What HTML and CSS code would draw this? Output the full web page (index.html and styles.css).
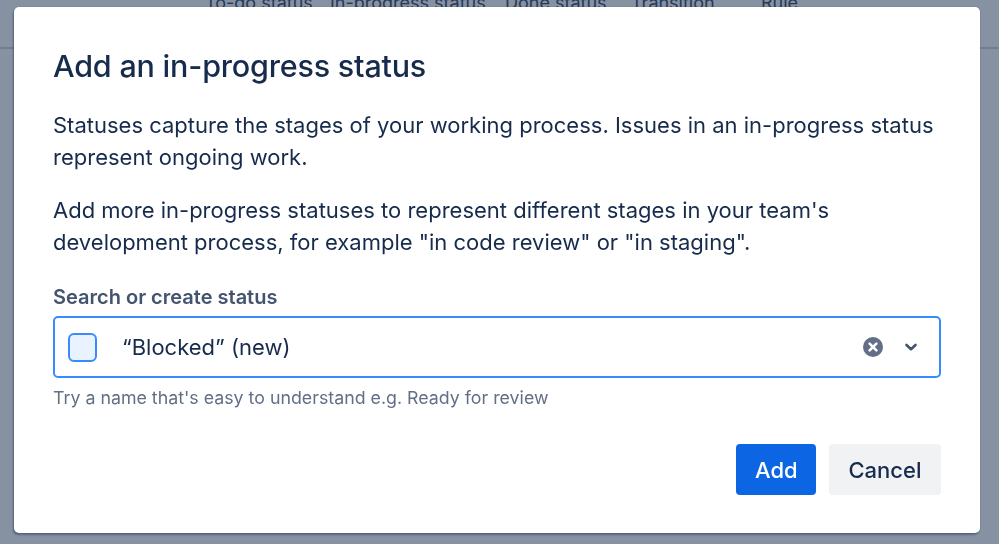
FILE: index.html
```html
<!DOCTYPE html>
<html lang="en">
<head>
<meta charset="utf-8">
<title>Add an in-progress status</title>
<link rel="stylesheet" href="styles.css">
</head>
<body>
<div class="page">
  <div class="table-head">
    <span class="col col-todo">To-do status</span>
    <span class="col col-prog">In-progress status</span>
    <span class="col col-done">Done status</span>
    <span class="col col-trans">Transition</span>
    <span class="col col-rule">Rule</span>
  </div>
</div>
<div class="blanket"></div>
<section class="modal" role="dialog" aria-labelledby="modal-title">
  <h1 class="modal-title" id="modal-title">Add an in-progress status</h1>
  <div class="modal-body">
    <p class="para">Statuses capture the stages of your working process. Issues in an in-progress status represent ongoing work.</p>
    <p class="para">Add more in-progress statuses to represent different stages in your team's development process, for example "in code review" or "in staging".</p>
    <label class="field-label" for="status">Search or create status</label>
    <div class="select">
      <span class="check"></span>
      <span class="select-value" id="status">“Blocked” (new)</span>
      <span class="select-icons">
        <svg class="icon-clear" width="20" height="20" viewBox="0 0 20 20" aria-hidden="true">
          <circle cx="10" cy="10" r="10" fill="#626f86"/>
          <path d="M6.6 6.6 L13.4 13.4 M13.4 6.6 L6.6 13.4" stroke="#fff" stroke-width="2.6" stroke-linecap="round"/>
        </svg>
        <svg class="icon-chevron" width="16" height="16" viewBox="0 0 16 16" aria-hidden="true">
          <path d="M3.5 6 L8 10.2 L12.5 6" fill="none" stroke="#44546f" stroke-width="2.6" stroke-linecap="round" stroke-linejoin="round"/>
        </svg>
      </span>
    </div>
    <p class="helper">Try a name that's easy to understand e.g. Ready for review</p>
  </div>
  <div class="modal-footer">
    <button class="btn btn-primary" type="button">Add</button>
    <button class="btn btn-subtle" type="button">Cancel</button>
  </div>
</section>
</body>
</html>
```
FILE: styles.css
```css
* { box-sizing: border-box; }

html, body {
  margin: 0;
  padding: 0;
  width: 999px;
  height: 544px;
  overflow: hidden;
  background: #ffffff;
  font-family: Inter, "Noto Sans", "Liberation Sans", sans-serif;
  color: #172b4d;
}

.page {
  width: 999px;
  height: 544px;
}

.table-head {
  display: flex;
  height: 49px;
  border-bottom: 2px solid #d4d8df;
  align-items: flex-start;
}

.col {
  font-size: 18px;
  line-height: 18px;
  margin-top: -6px;
  color: #44546f;
  white-space: nowrap;
}
.col-todo { margin-left: 205px; width: 125px; }
.col-prog { width: 175px; }
.col-done { width: 126px; }
.col-trans { width: 130px; }

.blanket {
  position: fixed;
  inset: 0;
  background: rgba(9, 30, 66, 0.49);
}

.modal {
  position: absolute;
  top: 7px;
  left: 14px;
  width: 966px;
  height: 526px;
  background: #ffffff;
  border-radius: 5px;
  padding: 0 39px;
  display: flex;
  flex-direction: column;
  box-shadow: 0 0 0 1px rgba(9, 30, 66, 0.06), -1px 2px 2px rgba(9, 30, 66, 0.35);
}

.modal-title {
  margin: 41px 0 0;
  font-size: 30.5px;
  line-height: 36px;
  font-weight: 500;
  letter-spacing: -0.2px;
  color: #172b4d;
}

.modal-body {
  display: flex;
  flex-direction: column;
  margin-top: 25px;
}

.para {
  margin: 0 0 21px;
  font-size: 22px;
  line-height: 32px;
  color: #172b4d;
}

.para + .para { margin-bottom: 30px; }

.field-label {
  font-size: 20px;
  line-height: 26px;
  font-weight: 600;
  color: #44546f;
  margin-top: -4px;
}

.select {
  margin-top: 6px;
  height: 62px;
  border: 2px solid #388bff;
  border-radius: 5px;
  display: flex;
  align-items: center;
  padding: 0 20px 0 13px;
  background: #ffffff;
}

.check {
  width: 29px;
  height: 29px;
  border: 2px solid #388bff;
  background: #e9f2ff;
  border-radius: 6px;
  flex: none;
}

.select-value {
  margin-left: 25px;
  font-size: 22px;
  line-height: 30px;
  color: #172b4d;
  flex: 1;
}

.select-icons {
  display: flex;
  align-items: center;
  gap: 20px;
}

.icon-clear, .icon-chevron { display: block; }

.helper {
  margin: 7px 0 0;
  font-size: 17.8px;
  line-height: 26px;
  color: #626f86;
}

.modal-footer {
  display: flex;
  justify-content: flex-end;
  gap: 13px;
  margin-top: 33px;
}

.btn {
  height: 51px;
  border: none;
  border-radius: 4px;
  font-family: inherit;
  font-size: 22px;
  font-weight: 500;
  padding: 0 19px;
  cursor: pointer;
}

.btn-primary {
  background: #0c66e4;
  color: #ffffff;
  width: 80px;
}

.btn-subtle {
  background: #f1f2f4;
  color: #172b4d;
  width: 112px;
}
```
